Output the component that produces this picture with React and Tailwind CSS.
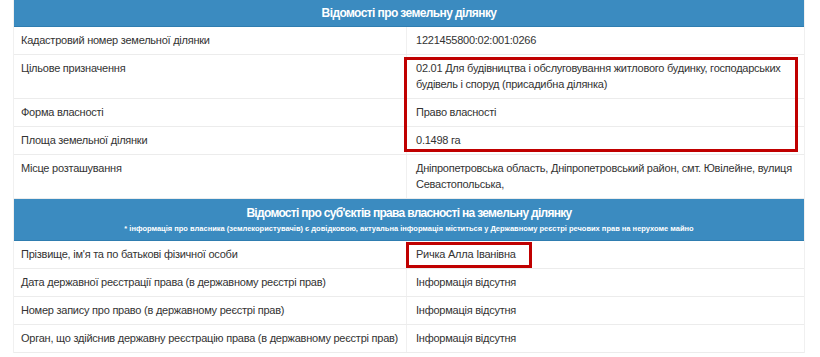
import React from "react";

const font = { fontFamily: '"Liberation Sans", Arial, sans-serif' };

function Row({ label, value }) {
  return (
    <div className="grid grid-cols-[393px_1fr] border-b border-[#ececec]">
      <div className="pl-[7px] pr-1 pt-[5px] pb-[6px] leading-[16px] border-r border-[#f0f0f0]">{label}</div>
      <div className="pl-[9px] pr-2 pt-[5px] pb-[6px] leading-[16px]">{value}</div>
    </div>
  );
}

export default function App() {
  return (
    <div className="w-[820px] h-[357px] bg-white overflow-hidden text-[11px] tracking-[-0.24px] text-[#333]" style={font}>
      <div className="relative ml-[13px] w-[792px] border-x border-[#f0f0f0]">
        <div className="h-[27px] bg-[#3b8bc0] border-b border-[#2f7db0] flex items-center justify-center text-white font-bold text-[12px] tracking-[-0.6px]">
          Відомості про земельну ділянку
        </div>
        <Row label="Кадастровий номер земельної ділянки" value="1221455800:02:001:0266" />
        <Row
          label="Цільове призначення"
          value="02.01 Для будівництва і обслуговування житлового будинку, господарських будівель і споруд (присадибна ділянка)"
        />
        <Row label="Форма власності" value="Право власності" />
        <Row label="Площа земельної ділянки" value="0.1498 га" />
        <Row
          label="Місце розташування"
          value="Дніпропетровська область, Дніпропетровський район, смт. Ювілейне, вулиця Севастопольська,"
        />
        <div className="h-[42px] bg-[#3b8bc0] border-b border-[#2f7db0] flex flex-col items-center justify-center text-white font-bold">
          <div className="text-[12px] leading-[16px] tracking-[-0.7px]">Відомості про суб'єктів права власності на земельну ділянку</div>
          <div className="text-[7.5px] leading-[12px] mt-[2px] tracking-normal">
            * інформація про власника (землекористувачів) є довідковою, актуальна інформація міститься у Державному реєстрі речових прав на нерухоме майно
          </div>
        </div>
        <Row label="Прізвище, ім'я та по батькові фізичної особи" value="Ричка Алла Іванівна" />
        <Row label="Дата державної реєстрації права (в державному реєстрі прав)" value="Інформація відсутня" />
        <Row label="Номер запису про право (в державному реєстрі прав)" value="Інформація відсутня" />
        <Row label="Орган, що здійснив державну реєстрацію права (в державному реєстрі прав)" value="Інформація відсутня" />

        <div className="absolute left-[390px] top-[57px] w-[394px] h-[95px] border-[3px] border-[#c00000] pointer-events-none" />
        <div className="absolute left-[392px] top-[242px] w-[126px] h-[26px] border-[3px] border-[#c00000] pointer-events-none" />
      </div>
    </div>
  );
}
